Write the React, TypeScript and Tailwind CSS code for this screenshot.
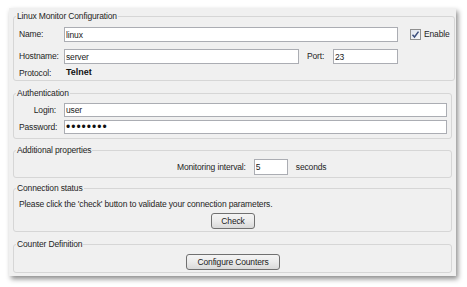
import React from "react";

const inputCls =
  "block border border-[#abadb3] bg-white px-[1px] text-[8.5px] tracking-[-0.15px] text-[#1a1a1a] outline-none";

function Group({
  title,
  className,
  children,
}: {
  title: string;
  className?: string;
  children: React.ReactNode;
}) {
  return (
    <fieldset
      className={
        "border border-[#d6d6d6] rounded-[3px] px-[5px] pr-[4px] " + (className ?? "")
      }
    >
      <legend className="ml-[-3px] px-[1px] leading-[10px] text-[#1e1e1e]">{title}</legend>
      {children}
    </fieldset>
  );
}

function Button({ label, w }: { label: string; w: string }) {
  return (
    <button
      type="button"
      className={
        "block mx-auto h-[16px] border border-[#707070] rounded-[3px] bg-linear-to-b from-[#f4f4f4] via-[#ebebeb] to-[#d9d9d9] text-[8.5px] tracking-[-0.15px] leading-[14px] text-[#1a1a1a] " +
        w
      }
    >
      {label}
    </button>
  );
}

export default function App() {
  return (
    <div
      className="min-h-screen bg-white text-[8.5px] tracking-[-0.15px] text-[#1e1e1e]"
      style={{ fontFamily: '"Liberation Sans", Arial, sans-serif' }}
    >
      <div className="pl-[9px] pt-[8px]">
        <div className="w-[447px] bg-[#f0f0f0] shadow-[2px_3px_5px_rgba(0,0,0,0.45)] px-[4px] pt-[3px] pb-[3px] flex flex-col">
          {/* Linux Monitor Configuration */}
          <Group title="Linux Monitor Configuration" className="pb-[1px]">
            <div className="pt-[6px] flex flex-col">
              <div className="flex items-center h-[15px]">
                <span className="w-[45px]">Name:</span>
                <input className={inputCls + " w-[334px] h-[15px]"} defaultValue="linux" readOnly />
                <span className="ml-[12px] flex items-center">
                  <span className="w-[11px] h-[11px] border border-[#8f8f8f] bg-linear-to-br from-[#dfe4ee] to-[#f8f9fb] flex items-center justify-center">
                    <svg width="9" height="9" viewBox="0 0 9 9">
                      <path d="M1.5 4.8 L3.5 7 L7.5 1.6" fill="none" stroke="#3c4f7e" strokeWidth="1.5" />
                    </svg>
                  </span>
                  <span className="ml-[3px]">Enable</span>
                </span>
              </div>
              <div className="flex items-center h-[15px] mt-[7px]">
                <span className="w-[45px]">Hostname:</span>
                <input className={inputCls + " w-[235px] h-[15px]"} defaultValue="server" readOnly />
                <span className="w-[26px] ml-[8px]">Port:</span>
                <input className={inputCls + " w-[65px] h-[15px]"} defaultValue="23" readOnly />
              </div>
              <div className="flex items-center h-[12px] mt-[3px]">
                <span className="w-[47px]">Protocol:</span>
                <span className="font-bold text-[9px] tracking-normal text-[#111]">Telnet</span>
              </div>
            </div>
          </Group>

          {/* Authentication */}
          <Group title="Authentication" className="mt-[7px] pb-[4px]">
            <div className="pt-[5px] flex flex-col">
              <div className="flex items-center h-[14px]">
                <span className="w-[37px] text-right">Login:</span>
                <input className={inputCls + " ml-[8px] flex-1 h-[14px]"} defaultValue="user" readOnly />
              </div>
              <div className="flex items-center h-[14px] mt-[3px]">
                <span className="w-[37px] text-right">Password:</span>
                <input
                  type="password"
                  className={inputCls + " ml-[8px] flex-1 h-[14px] text-[12px] tracking-[1px] text-[#111]"}
                  defaultValue="password"
                  readOnly
                />
              </div>
            </div>
          </Group>

          {/* Additional properties */}
          <Group title="Additional properties" className="mt-[6px] pb-[2px]">
            <div className="pt-[4px] flex items-center h-[20px] pl-[158px]">
              <span>Monitoring interval:</span>
              <input className={inputCls + " ml-[8px] w-[34px] h-[16px]"} defaultValue="5" readOnly />
              <span className="ml-[8px]">seconds</span>
            </div>
          </Group>

          {/* Connection status */}
          <Group title="Connection status" className="mt-[5px] pb-[2px]">
            <div className="pt-[5px] flex flex-col">
              <div className="h-[12px] leading-[12px]">
                Please click the 'check' button to validate your connection parameters.
              </div>
              <div className="mt-[3px]">
                <Button label="Check" w="w-[44px]" />
              </div>
            </div>
          </Group>

          {/* Counter Definition */}
          <Group title="Counter Definition" className="mt-[7px] pb-[2px]">
            <div className="pt-[5px]">
              <Button label="Configure Counters" w="w-[94px]" />
            </div>
          </Group>
        </div>
      </div>
    </div>
  );
}
